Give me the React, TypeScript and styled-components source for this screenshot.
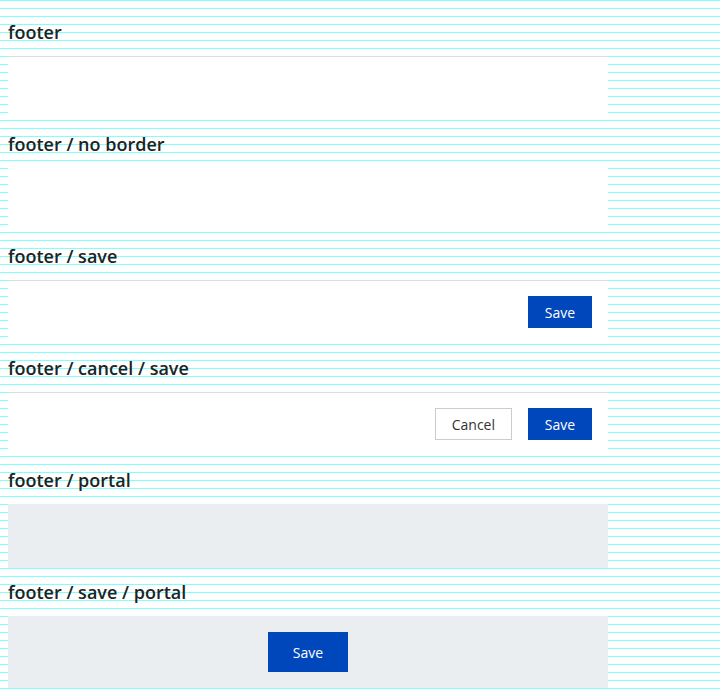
import React from "react";
import styled, { createGlobalStyle } from "styled-components";

const Global = createGlobalStyle`
  html {
    background-color: #ffffff;
    background-image: repeating-linear-gradient(
      to bottom,
      #80ffff 0px,
      #80ffff 1px,
      transparent 1px,
      transparent 8px
    );
    min-height: 100%;
  }
  body {
    margin: 8px;
    font-family: "Open Sans", "Noto Sans", sans-serif;
    color: #222222;
  }
`;

const Page = styled.div`
  display: flex;
  flex-direction: column;
  width: 600px;
`;

const Section = styled.section`
  display: flex;
  flex-direction: column;
`;

const Title = styled.h2`
  margin: 0;
  height: 48px;
  line-height: 48px;
  font-size: 18px;
  font-weight: 600;
  color: #222222;
`;

const Footer = styled.div<{ $border?: boolean; $portal?: boolean; $tall?: boolean }>`
  box-sizing: border-box;
  display: flex;
  align-items: flex-start;
  justify-content: ${(p) => (p.$portal ? "center" : "flex-end")};
  gap: 16px;
  height: ${(p) => (p.$tall ? "72px" : "64px")};
  padding: ${(p) => (p.$border ? "15px" : "16px")} 16px 16px;
  background: ${(p) => (p.$portal ? "#ebeef1" : "#ffffff")};
  border-top: ${(p) => (p.$border ? "1px solid #dddddd" : "none")};
`;

const Button = styled.button<{ $variant?: "primary" | "secondary"; $large?: boolean }>`
  box-sizing: border-box;
  height: ${(p) => (p.$large ? "40px" : "32px")};
  min-width: ${(p) => (p.$large ? "80px" : "64px")};
  padding: 0 16px;
  font-family: "Open Sans", "Noto Sans", sans-serif;
  font-size: 14px;
  font-weight: 500;
  cursor: pointer;
  border-radius: 0;
  ${(p) =>
    p.$variant === "secondary"
      ? `background: #ffffff; color: #333333; border: 1px solid #cccccc;`
      : `background: #0047bb; color: #ffffff; border: none;`}
`;

export default function App() {
  return (
    <>
      <Global />
      <Page>
        <Section>
          <Title>footer</Title>
          <Footer $border />
        </Section>
        <Section>
          <Title>footer / no border</Title>
          <Footer />
        </Section>
        <Section>
          <Title>footer / save</Title>
          <Footer $border>
            <Button>Save</Button>
          </Footer>
        </Section>
        <Section>
          <Title>footer / cancel / save</Title>
          <Footer $border>
            <Button $variant="secondary">Cancel</Button>
            <Button>Save</Button>
          </Footer>
        </Section>
        <Section>
          <Title>footer / portal</Title>
          <Footer $portal />
        </Section>
        <Section>
          <Title>footer / save / portal</Title>
          <Footer $portal $tall>
            <Button $large>Save</Button>
          </Footer>
        </Section>
      </Page>
    </>
  );
}
